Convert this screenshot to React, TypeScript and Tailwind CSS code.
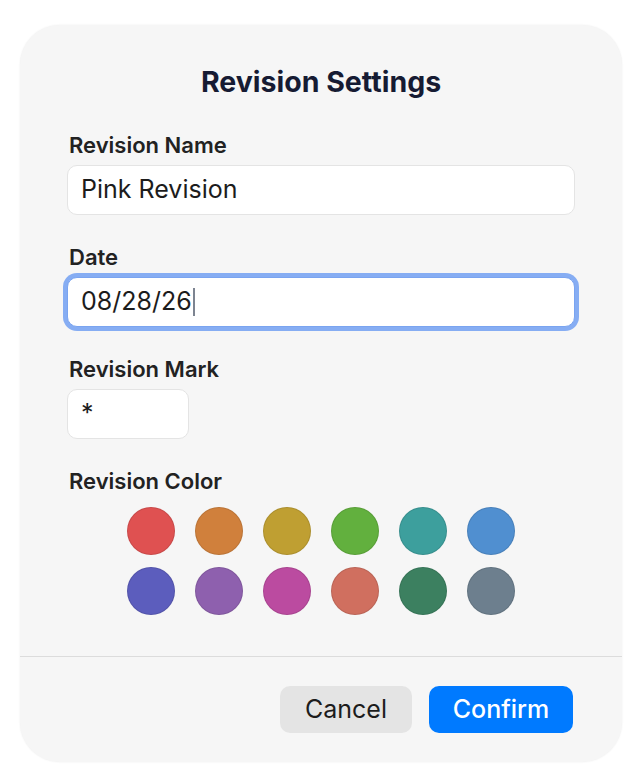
import React from 'react'

const colors = [
  '#df5151',
  '#d0803c',
  '#bf9f32',
  '#62b03e',
  '#3d9f9d',
  '#508fd0',
  '#5c5dbd',
  '#8e60ae',
  '#bb4ba0',
  '#d06f5f',
  '#3c8060',
  '#6d7f8e',
]

function Label({ children }: { children: React.ReactNode }) {
  return (
    <div className="h-6 pl-0.5 text-[22px] leading-6 font-semibold text-[#222222]">
      {children}
    </div>
  )
}

export default function App() {
  return (
    <div
      className="min-h-[784px] bg-white pl-5 pt-[25px]"
      style={{ fontFamily: 'Inter, "Noto Sans", sans-serif' }}
    >
      <div className="w-[602px] h-[737px] rounded-[40px] bg-[#f6f6f6] shadow-[0_0_2px_rgba(0,0,0,0.08)] flex flex-col">
        <div className="px-[47px] pt-[41px]">
          <h1 className="h-8 text-center text-[28.5px] leading-8 font-bold text-[#161b33]">
            Revision Settings
          </h1>

          <div className="mt-[35px] flex flex-col gap-[30px]">
            <div className="flex flex-col gap-2">
              <Label>Revision Name</Label>
              <div className="h-[50px] rounded-[10px] border border-[#e4e4e4] bg-white px-[13px] flex items-center text-[25px] text-[#1c1c1c]">
                Pink Revision
              </div>
            </div>

            <div className="flex flex-col gap-2">
              <Label>Date</Label>
              <div className="h-[50px] rounded-[10px] border border-[#7aa4f0] ring-[4px] ring-[#86adf3] bg-white px-[13px] flex items-center text-[25px] text-[#1c1c1c]">
                <span>08/28/26</span>
                <span className="ml-px inline-block w-[2px] h-[28px] bg-[#7d8491]" />
              </div>
            </div>

            <div className="flex flex-col gap-2">
              <Label>Revision Mark</Label>
              <div className="w-[122px] h-[50px] rounded-[10px] border border-[#e4e4e4] bg-white px-[13px] flex items-center text-[25px] text-[#1c1c1c]">
                *
              </div>
            </div>

            <div className="flex flex-col gap-[14px]">
              <Label>Revision Color</Label>
              <div className="grid grid-cols-[repeat(6,48px)] gap-x-5 gap-y-3 justify-center">
                {colors.map((c) => (
                  <div
                    key={c}
                    className="w-12 h-12 rounded-full border border-black/10"
                    style={{ backgroundColor: c }}
                  />
                ))}
              </div>
            </div>
          </div>
        </div>

        <div className="mt-[41px] h-px bg-[#dcdcdc]" />

        <div className="px-[49px] pt-[29px] flex justify-end gap-[17px]">
          <button className="w-[132px] h-[47px] rounded-[10px] bg-[#e4e4e4] text-[25px] text-[#1c1c1c]">
            Cancel
          </button>
          <button className="w-[144px] h-[47px] rounded-[10px] bg-[#007aff] text-[25px] font-medium text-white">
            Confirm
          </button>
        </div>
      </div>
    </div>
  )
}
